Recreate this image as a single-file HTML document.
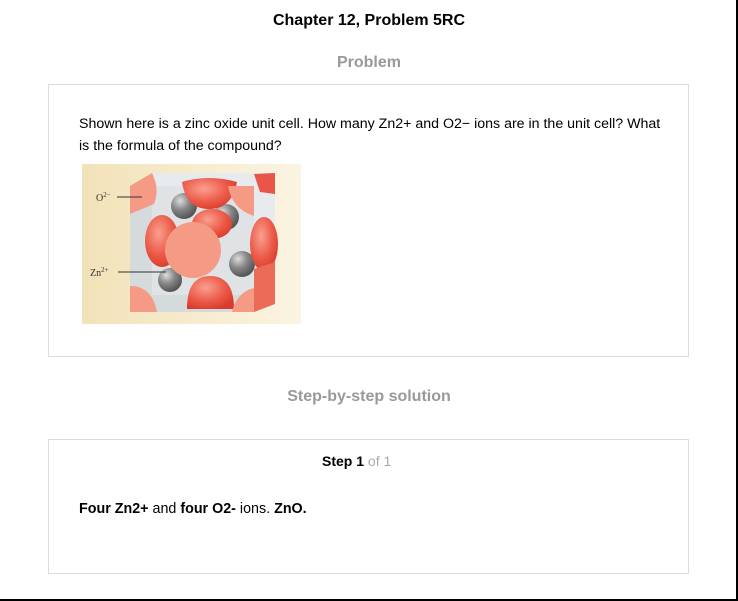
<!DOCTYPE html>
<html><head><meta charset="utf-8"><style>
body{margin:0;width:738px;height:601px;background:#fff;font-family:"Liberation Sans",Arial,sans-serif;position:relative;overflow:hidden}
.frame{position:absolute;left:0;top:0;width:736px;height:599px;border-right:2px solid #000;border-bottom:2px solid #000}
.t{position:absolute;left:0;width:738px;text-align:center}
.box{position:absolute;left:48px;width:639px;border:1px solid #ddd}
p{margin:0}
</style></head><body>
<div class="frame"></div>
<div class="t" style="top:12px;font-size:16px;font-weight:bold;color:#000">Chapter 12, Problem 5RC</div>
<div class="t" style="top:54px;font-size:16px;font-weight:bold;color:#999">Problem</div>
<div class="box" style="top:84px;height:271px"></div>
<div style="position:absolute;left:79px;top:113px;width:582px;font-size:14.2px;line-height:22px;color:#000">Shown here is a zinc oxide unit cell. How many Zn2+ and O2− ions are in the unit cell? What is the formula of the compound?</div>
<svg style="position:absolute;left:82px;top:164px" width="219" height="160" viewBox="0 0 219 160">
<defs>
<linearGradient id="bg" x1="0" x2="1"><stop offset="0" stop-color="#f2e2b8"/><stop offset="1" stop-color="#fbf4e2"/></linearGradient>
<radialGradient id="r" cx=".4" cy=".35" r=".7"><stop offset="0" stop-color="#f9a090"/><stop offset=".6" stop-color="#ec5a48"/><stop offset="1" stop-color="#d93a2a"/></radialGradient>
<radialGradient id="g" cx=".35" cy=".3" r=".7"><stop offset="0" stop-color="#ddd"/><stop offset=".5" stop-color="#888"/><stop offset="1" stop-color="#555"/></radialGradient>
</defs>
<rect width="219" height="160" fill="url(#bg)"/>
<polygon points="48,22 70,9 193,9 193,140 172,148 48,148" fill="#cfd4d8"/>
<rect x="70" y="9" width="123" height="122" fill="#e8ebee"/>
<rect x="48" y="22" width="124" height="126" fill="#d8dde1" opacity=".6"/>
<circle cx="102" cy="42" r="13" fill="url(#g)"/>
<circle cx="144" cy="53" r="13" fill="url(#g)"/>
<circle cx="160" cy="100" r="13" fill="url(#g)"/>
<circle cx="88" cy="116" r="12" fill="url(#g)"/>
<ellipse cx="80" cy="77" rx="17" ry="26" fill="url(#r)"/>
<ellipse cx="182" cy="80" rx="14" ry="27" fill="url(#r)"/>
<ellipse cx="130" cy="60" rx="20" ry="15" fill="url(#r)"/>
<path d="M105 145 Q105 112 128 112 Q152 112 152 145Z" fill="url(#r)"/>
<path d="M100 18 Q126 10 155 18 Q150 45 127 45 Q104 45 100 18Z" fill="url(#r)"/>
<circle cx="111" cy="86" r="28" fill="#f59a84"/>
<path d="M48 22 L70 9 Q78 25 72 40 L48 50Z" fill="#f59a84"/>
<path d="M48 122 Q70 122 75 148 L48 148Z" fill="#f59a84"/>
<path d="M146 22 L172 22 L172 52 Q150 45 146 22Z" fill="#f59a84"/>
<path d="M172 10 L193 9 L193 30 L178 28Z" fill="#e8564a"/>
<path d="M150 148 Q155 128 172 124 L172 148Z" fill="#f59a84"/>
<path d="M172 105 L193 98 L193 140 L172 148Z" fill="#ec6a58"/>
<text x="14" y="37" font-family="Liberation Serif,serif" font-size="10" fill="#333">O<tspan font-size="7" dy="-4">2−</tspan></text>
<line x1="35" y1="33" x2="60" y2="33" stroke="#333"/>
<text x="8" y="112" font-family="Liberation Serif,serif" font-size="10" fill="#333">Zn<tspan font-size="7" dy="-4">2+</tspan></text>
<line x1="36" y1="108" x2="84" y2="108" stroke="#333"/>
</svg>
<div class="t" style="top:388px;font-size:16px;font-weight:bold;color:#999">Step-by-step solution</div>
<div class="box" style="top:439px;height:133px"></div>
<div style="position:absolute;left:322px;top:453px;font-size:14px;color:#000"><b>Step 1</b> <span style="color:#aaa">of 1</span></div>
<div style="position:absolute;left:79px;top:501px;font-size:14.3px;color:#000"><b>Four Zn2+</b> and <b>four O2-</b> ions. <b>ZnO.</b></div>
</body></html>
